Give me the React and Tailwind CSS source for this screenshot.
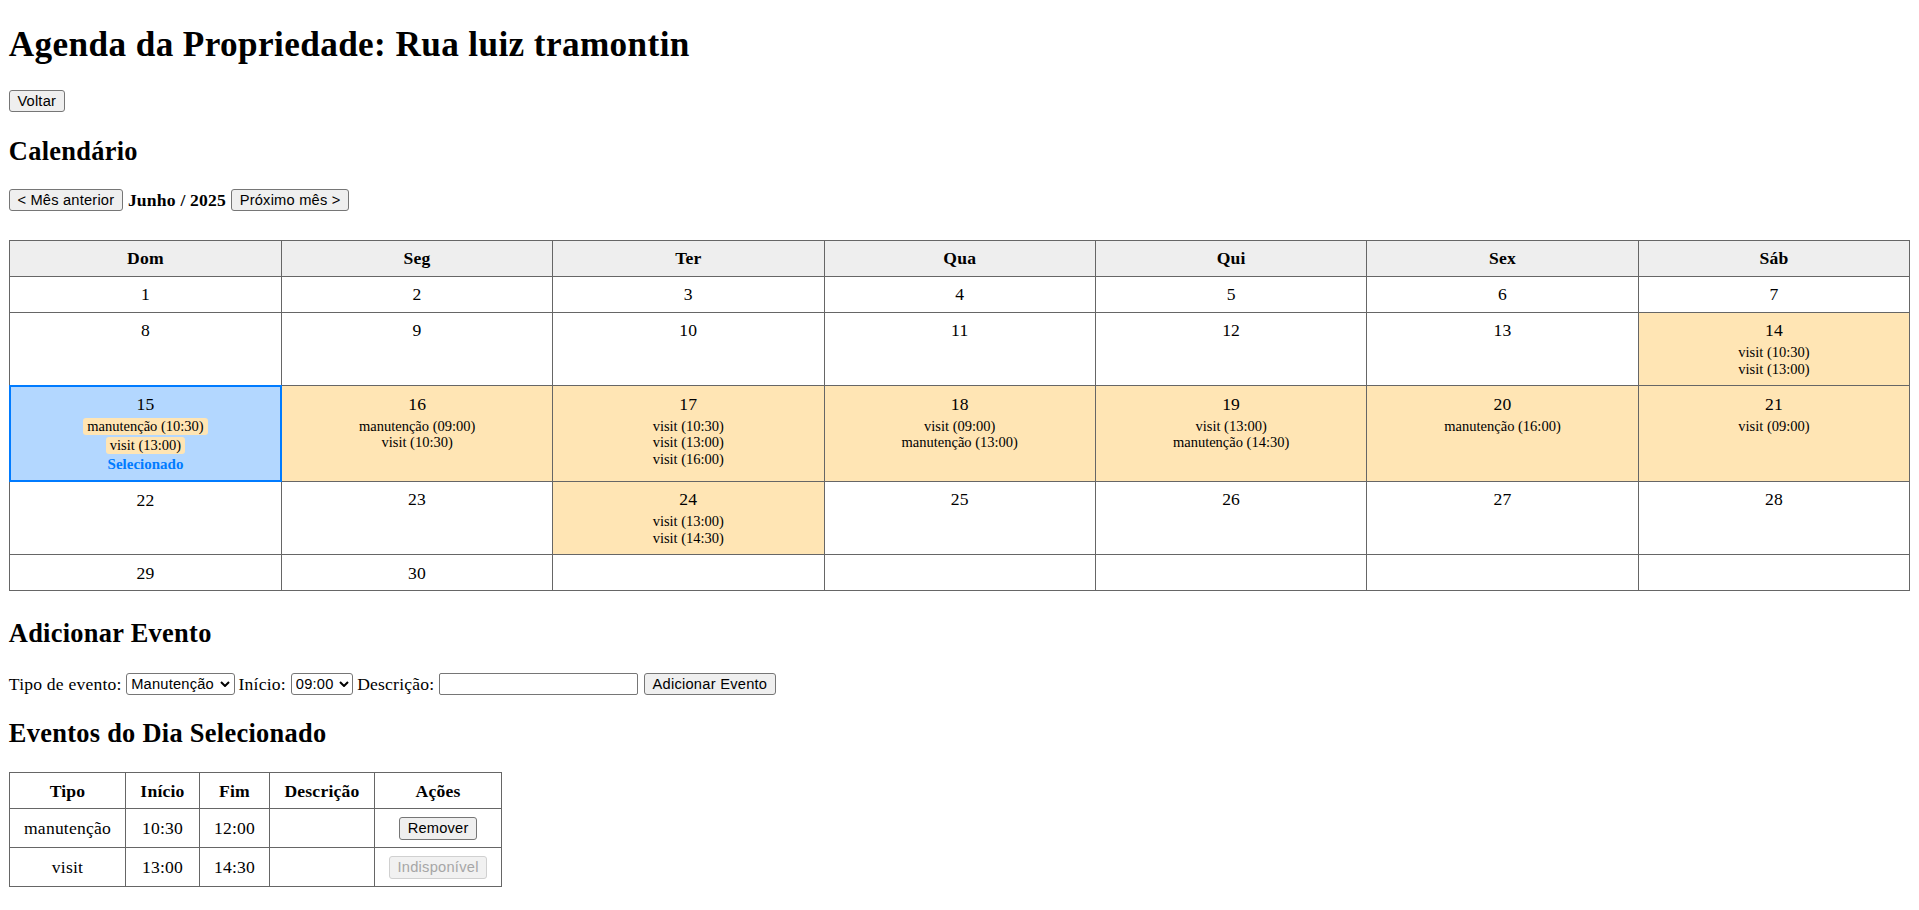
import { useState } from "react";

const weekDays = ["Dom", "Seg", "Ter", "Qua", "Qui", "Sex", "Sáb"];

const weeks = [
  [1, 2, 3, 4, 5, 6, 7],
  [8, 9, 10, 11, 12, 13, 14],
  [15, 16, 17, 18, 19, 20, 21],
  [22, 23, 24, 25, 26, 27, 28],
  [29, 30, null, null, null, null, null],
];

const eventsByDay = {
  14: ["visit (10:30)", "visit (13:00)"],
  15: ["manutenção (10:30)", "visit (13:00)"],
  16: ["manutenção (09:00)", "visit (10:30)"],
  17: ["visit (10:30)", "visit (13:00)", "visit (16:00)"],
  18: ["visit (09:00)", "manutenção (13:00)"],
  19: ["visit (13:00)", "manutenção (14:30)"],
  20: ["manutenção (16:00)"],
  21: ["visit (09:00)"],
  24: ["visit (13:00)", "visit (14:30)"],
};

const dayEvents = [
  { tipo: "manutenção", inicio: "10:30", fim: "12:00", descricao: "", canRemove: true },
  { tipo: "visit", inicio: "13:00", fim: "14:30", descricao: "", canRemove: false },
];

const btn =
  "inline-flex items-center justify-center h-[22.4px] px-[7.6px] border border-[#767676] rounded-[3px] bg-[#efefef] text-black font-['Liberation_Sans',Arial,sans-serif] text-[14.67px] leading-[16.9px] tracking-[0.2px] whitespace-nowrap";

const selectCls =
  "appearance-none h-[21.4px] pl-[4px] pr-[18px] border border-[#767676] rounded-[3px] bg-white text-black font-['Liberation_Sans',Arial,sans-serif] text-[14.67px] leading-[16.9px] tracking-[0.2px]";

// seta do select
const Chevron = () => (
  <svg width="10" height="6" viewBox="0 0 10 6" className="-ml-[14.5px] mr-[4.5px] pointer-events-none shrink-0">
    <path d="M1 1 L5 5 L9 1" fill="none" stroke="#000" strokeWidth="2" />
  </svg>
);

export default function App() {
  const [selected, setSelected] = useState(15);
  const [tipo, setTipo] = useState("manutencao");
  const [inicio, setInicio] = useState("09:00");
  const [descricao, setDescricao] = useState("");

  return (
    <div className="min-h-screen bg-white px-[8.8px] pb-[20px] text-black font-['Liberation_Serif','Times_New_Roman',serif] text-[17.6px] leading-[20.2px] tracking-[0.2px]">
      <h1 className="mt-[24.6px] text-[35.2px] font-bold leading-[40.4px] tracking-[0.39px]">
        Agenda da Propriedade: Rua luiz tramontin
      </h1>

      <div className="mt-[25px] flex">
        <button className={btn}>Voltar</button>
      </div>

      <h2 className="mt-[23.6px] text-[26.4px] font-bold leading-[30.3px] tracking-[0.29px]">Calendário</h2>

      <div className="mt-[22.8px] flex items-center gap-[5px]">
        <button className={btn}>&lt; Mês anterior</button>
        <strong className="font-bold">Junho / 2025</strong>
        <button className={btn}>Próximo mês &gt;</button>
      </div>

      {/* Calendario do mes */}
      <table className="mt-[28.3px] w-full table-fixed border-collapse border border-[#666]">
        <thead>
          <tr>
            {weekDays.map((d) => (
              <th
                key={d}
                className="border border-[#666] bg-[#eee] py-[7.4px] px-[7px] font-bold leading-[20.2px]"
              >
                {d}
              </th>
            ))}
          </tr>
        </thead>
        <tbody>
          {weeks.map((week, wi) => (
            <tr key={wi}>
              {week.map((day, di) => {
                const evs = day ? eventsByDay[day] || [] : [];
                const isSel = day === selected;
                let cellBg = "bg-white";
                if (evs.length) cellBg = "bg-[#ffe5b4]";
                if (isSel) cellBg = "bg-[#b3d7ff]";
                return (
                  <td
                    key={di}
                    onClick={() => day && setSelected(day)}
                    className={`align-top text-center py-[7.4px] px-[7px] ${cellBg} ${
                      isSel ? "border-2 border-[#007bff]" : "border border-[#666]"
                    }`}
                  >
                    {day && <div className="leading-[20.2px]">{day}</div>}
                    {evs.length > 0 && (
                      <div className="mt-[4px] text-[14.5px] leading-[16.7px] tracking-normal">
                        {evs.map((e, i) => (
                          <div key={i} className={isSel ? "mb-[2px]" : ""}>
                            <span className="inline-block rounded-[3px] bg-[#ffe5b4] px-[4px] leading-[16.7px]">
                              {e}
                            </span>
                          </div>
                        ))}
                      </div>
                    )}
                    {isSel && (
                      <div className="text-[15px] font-bold leading-[17.2px] tracking-normal text-[#007bff]">
                        Selecionado
                      </div>
                    )}
                  </td>
                );
              })}
            </tr>
          ))}
        </tbody>
      </table>

      <h2 className="mt-[27.2px] text-[26.4px] font-bold leading-[30.3px] tracking-[0.29px]">Adicionar Evento</h2>

      <div className="mt-[24.3px] flex items-center">
        <span>Tipo de evento:</span>
        <span className="ml-[4.6px] inline-flex items-center">
          <select value={tipo} onChange={(e) => setTipo(e.target.value)} className={`${selectCls} w-[108.3px]`}>
            <option value="manutencao">Manutenção</option>
            <option value="visit">Visita</option>
          </select>
          <Chevron />
        </span>
        <span className="ml-[4px]">Início:</span>
        <span className="ml-[5px] inline-flex items-center">
          <select value={inicio} onChange={(e) => setInicio(e.target.value)} className={`${selectCls} w-[62.3px]`}>
            {["09:00", "09:30", "10:00", "10:30", "11:00", "13:00", "14:30", "16:00"].map((h) => (
              <option key={h} value={h}>
                {h}
              </option>
            ))}
          </select>
          <Chevron />
        </span>
        <span className="ml-[4px]">Descrição:</span>
        <input
          value={descricao}
          onChange={(e) => setDescricao(e.target.value)}
          className="ml-[5px] w-[199px] h-[22.4px] px-[2px] border border-[#767676] rounded-[2px] bg-white font-['Liberation_Sans',Arial,sans-serif] text-[14.67px]"
        />
        <button className={`${btn} ml-[5.5px] tracking-[0.25px]`}>Adicionar Evento</button>
      </div>

      <h2 className="mt-[23px] text-[26.4px] font-bold leading-[30.3px] tracking-[0.29px]">Eventos do Dia Selecionado</h2>

      <table className="mt-[23.7px] border-collapse border border-[#666]">
        <thead>
          <tr className="h-[35.6px]">
            {["Tipo", "Início", "Fim", "Descrição", "Ações"].map((h) => (
              <th key={h} className="border border-[#666] px-[14.2px] py-[7.4px] font-bold leading-[20.2px] text-center">
                {h}
              </th>
            ))}
          </tr>
        </thead>
        <tbody>
          {dayEvents.map((ev, i) => (
            <tr key={i} className="h-[39px]">
              <td className="border border-[#666] px-[14.2px] py-[7.4px] text-center">{ev.tipo}</td>
              <td className="border border-[#666] px-[14.2px] py-[7.4px] text-center">{ev.inicio}</td>
              <td className="border border-[#666] px-[14.2px] py-[7.4px] text-center">{ev.fim}</td>
              <td className="border border-[#666] px-[14.2px] py-[7.4px] text-center">{ev.descricao}</td>
              <td className="border border-[#666] px-[14.2px] py-[7.4px] text-center">
                {ev.canRemove ? (
                  <button className={`${btn} align-middle`}>Remover</button>
                ) : (
                  <button
                    disabled
                    className="inline-flex items-center justify-center align-middle h-[22.4px] px-[7.6px] border border-[#d0d0d0] rounded-[3px] bg-[#f1f1f1] text-[#a6a6a6] font-['Liberation_Sans',Arial,sans-serif] text-[14.67px] leading-[16.9px] tracking-[0.25px] whitespace-nowrap"
                  >
                    Indisponível
                  </button>
                )}
              </td>
            </tr>
          ))}
        </tbody>
      </table>
    </div>
  );
}
